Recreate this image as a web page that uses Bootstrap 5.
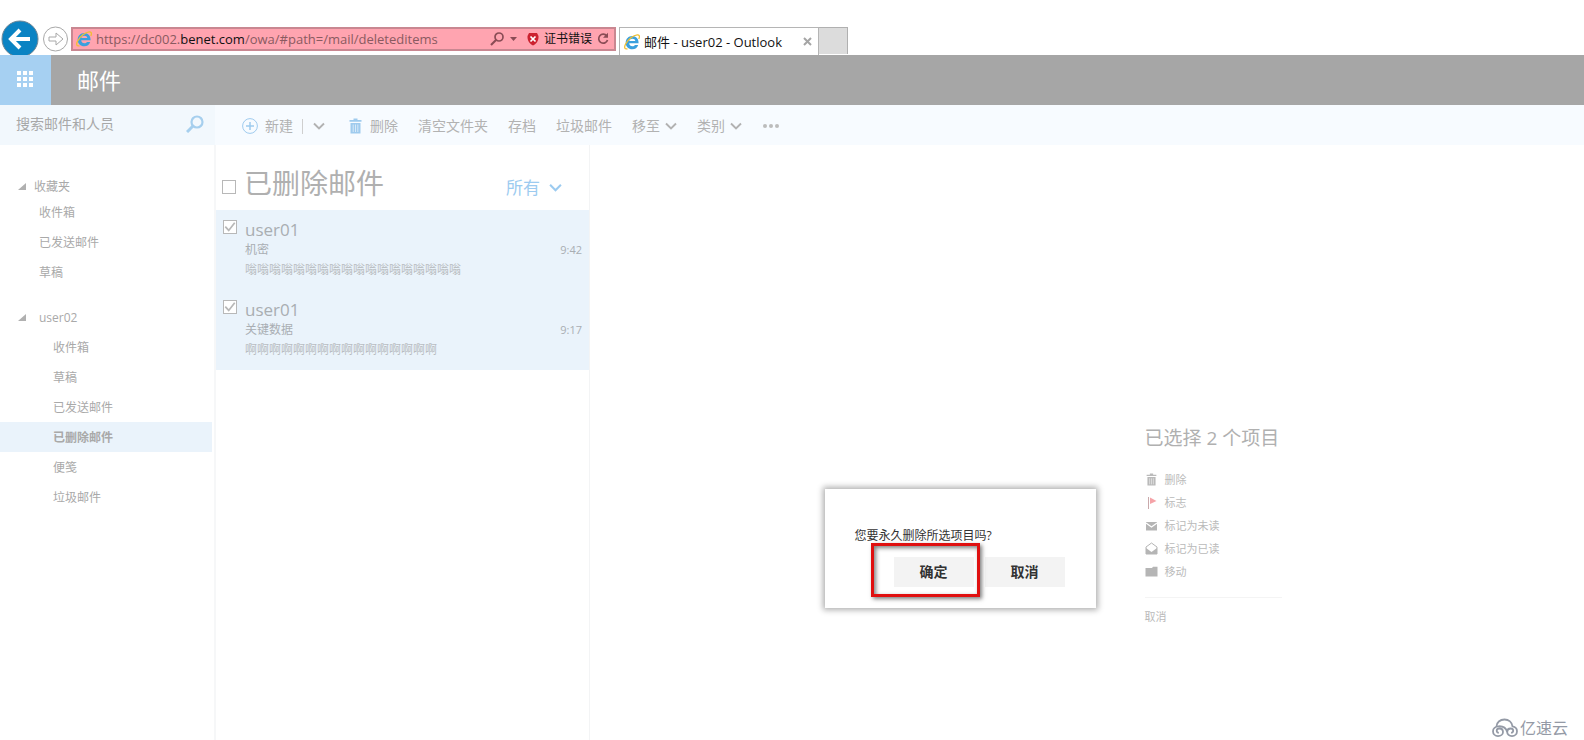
<!DOCTYPE html>
<html lang="zh-CN">
<head>
<meta charset="utf-8">
<meta name="viewport" content="width=device-width, initial-scale=1">
<title>邮件 - user02 - Outlook</title>
<link rel="stylesheet" href="https://cdn.jsdelivr.net/npm/bootstrap@5.3.0/dist/css/bootstrap.min.css">
<style>
  body { font-family: "Open Sans", "Noto Sans CJK SC", sans-serif; font-size: 12px; line-height: 20px; color: #b2b2b2; background: #fff; }
  button { font: inherit; color: inherit; background: none; border: 0; padding: 0; }
  a { color: inherit; text-decoration: none; }
  svg { display: block; flex: none; }

  .browser-bar { height: 55px; padding: 20px 0 1px 1px; overflow: hidden; }
  .address { width: 545px; height: 24px; margin: 7px 0 0 2px; padding: 0 4px 0 3px; background: #ffa4b0; border: 2px solid #c98791; color: #8a5a60; font-size: 13px; }
  .address .host { color: #111; }
  .address .cert { font-size: 12px; color: #111; }
  .page-tab { width: 200px; height: 28px; margin: 7px 0 0 3px; padding: 0 6px 0 4px; border: 1px solid #b5b5b5; border-bottom: 0; color: #111; font-size: 13px; }
  .blank-tab { width: 29px; height: 27px; margin-top: 7px; background: #dcdcdc; border: 1px solid #b0b0b0; border-left: 0; border-bottom: 0; }

  .app-bar { height: 50px; background: #a6a6a6; color: #fff; font-size: 22px; }
  .app-name { margin-left: 26px; }
  .launcher { width: 51px; background: #a6d0f2; padding: 0 2px 2px 0; }
  .tools { height: 40px; background: #f7fbff; font-size: 14px; }
  .search { width: 215px; padding: 0 11px 2px 16px; background: #f2f8fd; }
  .search input { border: 0; background: none; padding: 0; width: 160px; color: #a8a8a8; outline: 0; }
  .search input::placeholder { color: #a8a8a8; opacity: 1; }
  .commands { gap: 20px; padding: 2px 0 0 27px; }
  .drop { gap: 5px; }
  .new-mail { gap: 7px; }
  .divider-v { width: 1px; height: 15px; background: #cfcfcf; margin: 0 10px 0 9px; }

  .folders { width: 216px; padding-top: 31px; border-right: 2px solid #f6f7f8; color: #a9a9a9; }
  .group-name { padding-left: 18px; gap: 8px; }
  .favorites .group-name { height: 22px; }
  .mailbox { margin-top: 15px; }
  .mailbox .group-name { height: 29px; gap: 13px; }
  .folder { display: block; height: 30px; line-height: 30px; padding-left: 39px; }
  .mailbox .folder { padding: 1px 0 0 53px; margin-right: 2px; }
  .folder.active { background: #eaf3fb; font-weight: 700; }

  .messages { width: 374px; border-right: 1px solid #f3f4f5; }
  .messages-head { height: 65px; padding: 11px 27px 0 6px; }
  .messages-head h1 { font-size: 28px; line-height: 40px; font-weight: 400; margin: 0 auto 0 8px; color: #b0b0b0; }
  .filter { font-size: 17px; color: #9ccbf0; gap: 9px; margin-top: 9px; }
  .form-check-input { width: 14px; height: 14px; margin: 0; border: 1px solid #b8b8b8; border-radius: 0 !important; background-color: #fff; flex: none; }
  .form-check-input:checked { background-color: #fff; border-color: #b8b8b8; background-image: url("data:image/svg+xml,%3Csvg xmlns='http://www.w3.org/2000/svg' viewBox='0 0 14 14'%3E%3Cpath d='M1.500 6.500l4 4.500 7-9' fill='none' stroke='%23b8b8b8' stroke-width='2'/%3E%3C/svg%3E"); }
  .message { height: 80px; padding: 10px 7px 0; background: #eaf3fb; color: #a9aeb3; }
  .message h2 { font-size: 17px; line-height: 20px; font-weight: 400; margin: 0; color: #a9aeb2; }
  .message time { font-size: 11px; }
  .preview { color: #b9bdc1; }

  .reading { padding: 278px 0 0 252px; }
  .summary { width: 137px; font-size: 11px; color: #bababa; }
  .summary h2 { font-size: 19px; line-height: 30px; font-weight: 400; margin: 0 0 15px; color: #b0b0b0; white-space: nowrap; }
  .action { height: 23px; gap: 7px; }
  .summary hr { margin: 14px 0 9px; border-color: #d5d5d5; }

  .dialog-layer { position: absolute; inset: 0; padding: 489px 0 0 336px; pointer-events: none; }
  .dialog-box { position: relative; width: 271px; height: 119px; padding: 37px 31px 0 30px; background: #fff; box-shadow: 0 0 6px 2px rgba(0,0,0,.32); color: #333; pointer-events: auto; }
  .dialog-box p { margin: 0 0 11px; }
  .choices { gap: 11px; }
  .dialog-box button { width: 80px; height: 30px; background: #f3f3f3; font-size: 14px; font-weight: 700; }
  .marker { position: absolute; left: 46px; top: 54px; width: 109px; height: 54px; border: 3px solid #e01010; box-shadow: 2px 2px 4px rgba(0,0,0,.5), inset 2px 2px 4px rgba(0,0,0,.5); pointer-events: none; }
  .brand { position: absolute; right: 16px; bottom: 0; gap: 2px; font-size: 16px; line-height: 24px; color: #949aa6; }
</style>
<script src="https://cdn.jsdelivr.net/npm/bootstrap@5.3.0/dist/js/bootstrap.bundle.min.js"></script>
</head>
<body class="d-flex flex-column min-vh-100 position-relative">
<svg width="0" height="0" class="position-absolute" aria-hidden="true">
  <symbol id="ie" viewBox="0 0 16 16">
    <path d="M14.600 9.300H5.200c.1 2 1.500 2.900 3.200 2.900 1.200 0 2-.4 2.600-1.300h3.200c-.8 2.700-2.900 4.300-5.900 4.300-3.800 0-6.600-2.600-6.600-6.500s2.800-6.700 6.600-6.700 6.500 2.900 6.300 7.300zM5.300 7h6c-.2-1.500-1.300-2.300-2.900-2.300S5.600 5.500 5.300 7z" fill="#3aa0de"/>
    <path d="M14.800 5C16 2.200 15.300.6 13.200.8 9.500 1.100 4 5.500 1.500 10.200c-1.600 3.200-.9 5.300 2 4.600" fill="none" stroke="#efbf33" stroke-width="1.300"/>
  </symbol>
  <symbol id="chev" viewBox="0 0 12 8"><path d="M1 1.500l5 5 5-5" fill="none" stroke="currentColor" stroke-width="1.900"/></symbol>
  <symbol id="trash" viewBox="0 0 12 16"><path d="M0 2h4V.5h4V2h4v1.700H0zM1 5h10v10.500H1z" fill="currentColor"/><path d="M3.700 6.500v7.500M6 6.500v7.500M8.300 6.500v7.500" stroke="#fff" stroke-width=".6"/></symbol>
  <symbol id="tri" viewBox="0 0 8 8"><path d="M8 0v7H0z" fill="#b0b0b0"/></symbol>
</svg>

<div class="browser-bar d-flex">
  <button aria-label="后退"><svg width="38" height="38" viewBox="0 0 38 38"><circle cx="19" cy="19" r="18" fill="#0b83c3" stroke="#6f8796"/><path d="M29 19H11M19 10l-9 9 9 9" fill="none" stroke="#fff" stroke-width="4"/></svg></button>
  <button class="ms-1" aria-label="前进"><svg width="26" height="38" viewBox="0 0 26 38"><circle cx="12.500" cy="19" r="12" fill="#fff" stroke="#a8a8a8"/><path d="M6 17h7v-4l7 6-7 6v-4H6z" fill="#fff" stroke="#a8a8a8"/></svg></button>
  <div class="address d-flex align-items-center" role="textbox" aria-label="地址">
    <svg class="me-1" width="16" height="16"><use href="#ie"/></svg>
    <span class="me-auto">https://dc002.<span class="host">benet.com</span>/owa/#path=/mail/deleteditems</span>
    <svg width="28" height="16" viewBox="0 0 28 16"><circle cx="9" cy="6" r="4" fill="none" stroke="#8a4c55" stroke-width="1.700"/><path d="M6 9l-5 5" stroke="#8a4c55" stroke-width="2.200"/><path d="M20 6h7l-3.500 4z" fill="#8a4c55"/></svg>
    <svg class="ms-2" width="14" height="14" viewBox="0 0 14 14"><path d="M3 1h8l1.500 3c.3 4-1.500 7.500-5.500 9.500C3 11.500 1.200 8 1.500 4z" fill="#cc2230"/><path d="M4.500 4.500l5 5M9.500 4.500l-5 5" stroke="#fff" stroke-width="1.700"/></svg>
    <a href="#" class="cert ms-1">证书错误</a>
    <svg class="ms-1" width="14" height="14" viewBox="0 0 14 14"><path d="M10.800 4A4.500 4.500 0 1 0 11.500 8" fill="none" stroke="#8a4c55" stroke-width="1.700"/><path d="M12 .8v5H7z" fill="#8a4c55"/></svg>
  </div>
  <div class="page-tab d-flex align-items-center">
    <svg class="me-1" width="16" height="16"><use href="#ie"/></svg>
    <span class="me-auto">邮件 - user02 - Outlook</span>
    <button aria-label="关闭"><svg width="9" height="9" viewBox="0 0 9 9"><path d="M1 1l7 7M8 1l-7 7" stroke="#a5a5a5" stroke-width="2"/></svg></button>
  </div>
  <div class="blank-tab"></div>
</div>

<header class="app-bar d-flex align-items-stretch">
  <button class="launcher d-flex align-items-center justify-content-center" aria-label="应用启动器">
    <svg width="16" height="16" viewBox="0 0 16 16" fill="#fff"><path d="M0 0h4v4H0zM6 0h4v4H6zM12 0h4v4h-4zM0 6h4v4H0zM6 6h4v4H6zM12 6h4v4h-4zM0 12h4v4H0zM6 12h4v4H6zM12 12h4v4h-4z"/></svg>
  </button>
  <span class="app-name align-self-center">邮件</span>
</header>

<div class="tools d-flex">
  <div class="search d-flex align-items-center justify-content-between">
    <input type="text" aria-label="搜索" placeholder="搜索邮件和人员">
    <svg width="18" height="18" viewBox="0 0 18 18"><circle cx="11" cy="7" r="5.500" fill="none" stroke="#a6cfee" stroke-width="2.200"/><path d="M7 11l-6 6" stroke="#a6cfee" stroke-width="3"/></svg>
  </div>
  <div class="commands d-flex align-items-center">
    <div class="d-flex align-items-center me-1">
      <button class="new-mail d-flex align-items-center"><svg width="16" height="16" viewBox="0 0 16 16"><circle cx="8" cy="8" r="7.400" fill="none" stroke="#9fcbee"/><path d="M8 4v8M4 8h8" stroke="#9fcbee" stroke-width="1.500"/></svg>新建</button>
      <span class="divider-v"></span>
      <button aria-label="更多新建选项"><svg width="12" height="8"><use href="#chev"/></svg></button>
    </div>
    <button class="d-flex align-items-center gap-2"><svg width="13" height="16" style="color:#9fcbee"><use href="#trash"/></svg>删除</button>
    <button>清空文件夹</button>
    <button>存档</button>
    <button>垃圾邮件</button>
    <button class="drop d-flex align-items-center">移至<svg width="12" height="8"><use href="#chev"/></svg></button>
    <button class="drop d-flex align-items-center">类别<svg width="12" height="8"><use href="#chev"/></svg></button>
    <button aria-label="更多"><svg width="18" height="6" viewBox="0 0 18 6" fill="#bcbcbc"><circle cx="3" cy="3" r="2"/><circle cx="9" cy="3" r="2"/><circle cx="15" cy="3" r="2"/></svg></button>
  </div>
</div>

<main class="d-flex flex-grow-1">
  <nav class="folders flex-shrink-0">
    <div class="favorites">
      <div class="group-name d-flex align-items-center"><svg width="8" height="8"><use href="#tri"/></svg>收藏夹</div>
      <a href="#" class="folder">收件箱</a>
      <a href="#" class="folder">已发送邮件</a>
      <a href="#" class="folder">草稿</a>
    </div>
    <div class="mailbox">
      <div class="group-name d-flex align-items-center"><svg width="8" height="8"><use href="#tri"/></svg>user02</div>
      <a href="#" class="folder">收件箱</a>
      <a href="#" class="folder">草稿</a>
      <a href="#" class="folder">已发送邮件</a>
      <a href="#" class="folder active">已删除邮件</a>
      <a href="#" class="folder">便笺</a>
      <a href="#" class="folder">垃圾邮件</a>
    </div>
  </nav>

  <section class="messages flex-shrink-0">
    <div class="messages-head d-flex align-items-center">
      <input class="form-check-input mt-2" type="checkbox" aria-label="全选">
      <h1>已删除邮件</h1>
      <button class="filter d-flex align-items-center">所有<svg width="13" height="9"><use href="#chev"/></svg></button>
    </div>
    <article class="message d-flex gap-2">
      <input class="form-check-input" type="checkbox" checked aria-label="选择 机密">
      <div class="flex-grow-1">
        <h2>user01</h2>
        <div class="d-flex justify-content-between"><span>机密</span><time>9:42</time></div>
        <div class="preview">嗡嗡嗡嗡嗡嗡嗡嗡嗡嗡嗡嗡嗡嗡嗡嗡嗡嗡</div>
      </div>
    </article>
    <article class="message d-flex gap-2">
      <input class="form-check-input" type="checkbox" checked aria-label="选择 关键数据">
      <div class="flex-grow-1">
        <h2>user01</h2>
        <div class="d-flex justify-content-between"><span>关键数据</span><time>9:17</time></div>
        <div class="preview">啊啊啊啊啊啊啊啊啊啊啊啊啊啊啊啊</div>
      </div>
    </article>
  </section>

  <section class="reading flex-grow-1 d-flex justify-content-center">
    <div class="summary">
      <h2>已选择 2 个项目</h2>
      <button class="action d-flex align-items-center"><svg width="13" height="13"><use href="#trash"/></svg>删除</button>
      <button class="action d-flex align-items-center"><svg width="13" height="13" viewBox="0 0 13 13"><path d="M3.500 1v12" stroke="#c9a9ab"/><path d="M5 1.500l6.500 3.500L5 8z" fill="#f5a3a8"/></svg>标志</button>
      <button class="action d-flex align-items-center"><svg width="13" height="13" viewBox="0 0 13 13"><path d="M1 3h11v8.500H1z" fill="#b5b5b5"/><path d="M1 4l5.500 4L12 4" fill="none" stroke="#fff" stroke-width="1.200"/></svg>标记为未读</button>
      <button class="action d-flex align-items-center"><svg width="13" height="13" viewBox="0 0 13 13"><path d="M1 5l5.500-4L12 5v7H1z" fill="#fff" stroke="#b5b5b5"/><path d="M1 6l5.500 4L12 6v6H1z" fill="#b5b5b5"/></svg>标记为已读</button>
      <button class="action d-flex align-items-center"><svg width="13" height="13" viewBox="0 0 13 13"><path d="M.5 3H7l1-1.300h4.500v9.800H.5z" fill="#b5b5b5"/></svg>移动</button>
      <hr>
      <button>取消</button>
    </div>
  </section>
</main>

<div class="dialog-layer d-flex justify-content-center align-items-start">
  <div class="dialog-box" role="dialog" aria-label="确认删除">
    <p>您要永久删除所选项目吗?</p>
    <div class="choices d-flex justify-content-end">
      <button>确定</button>
      <button>取消</button>
    </div>
    <span class="marker"></span>
  </div>
</div>
<div class="brand d-flex align-items-center">
  <svg width="26" height="20" viewBox="0 0 26 20" fill="none" stroke="#949aa6" stroke-width="1.800"><path d="M4.500 8.500C4.500 4.500 8 1.500 12.500 1.500c4.300 0 7.500 2.800 8 6.800 2.800.5 4.500 2.500 4.500 4.900 0 2.800-2.200 4.900-5 4.900s-4.800-1.900-4.800-4.200c0-2 1.500-3.400 3.300-3.400 1.600 0 2.700 1 2.700 2.300s-1 2-2.200 1.800"/><path d="M15.200 14C14 10 10.500 8 6.500 8.300 3.300 8.500 1 10.500 1 13.200c0 2.800 2.200 4.900 5 4.900s5-1.900 5-4.200c0-2-1.600-3.400-3.500-3.400-1.700 0-2.800 1-2.800 2.300s1 2 2.200 1.800"/></svg>
  <span>亿速云</span>
</div>
</body>
</html>
